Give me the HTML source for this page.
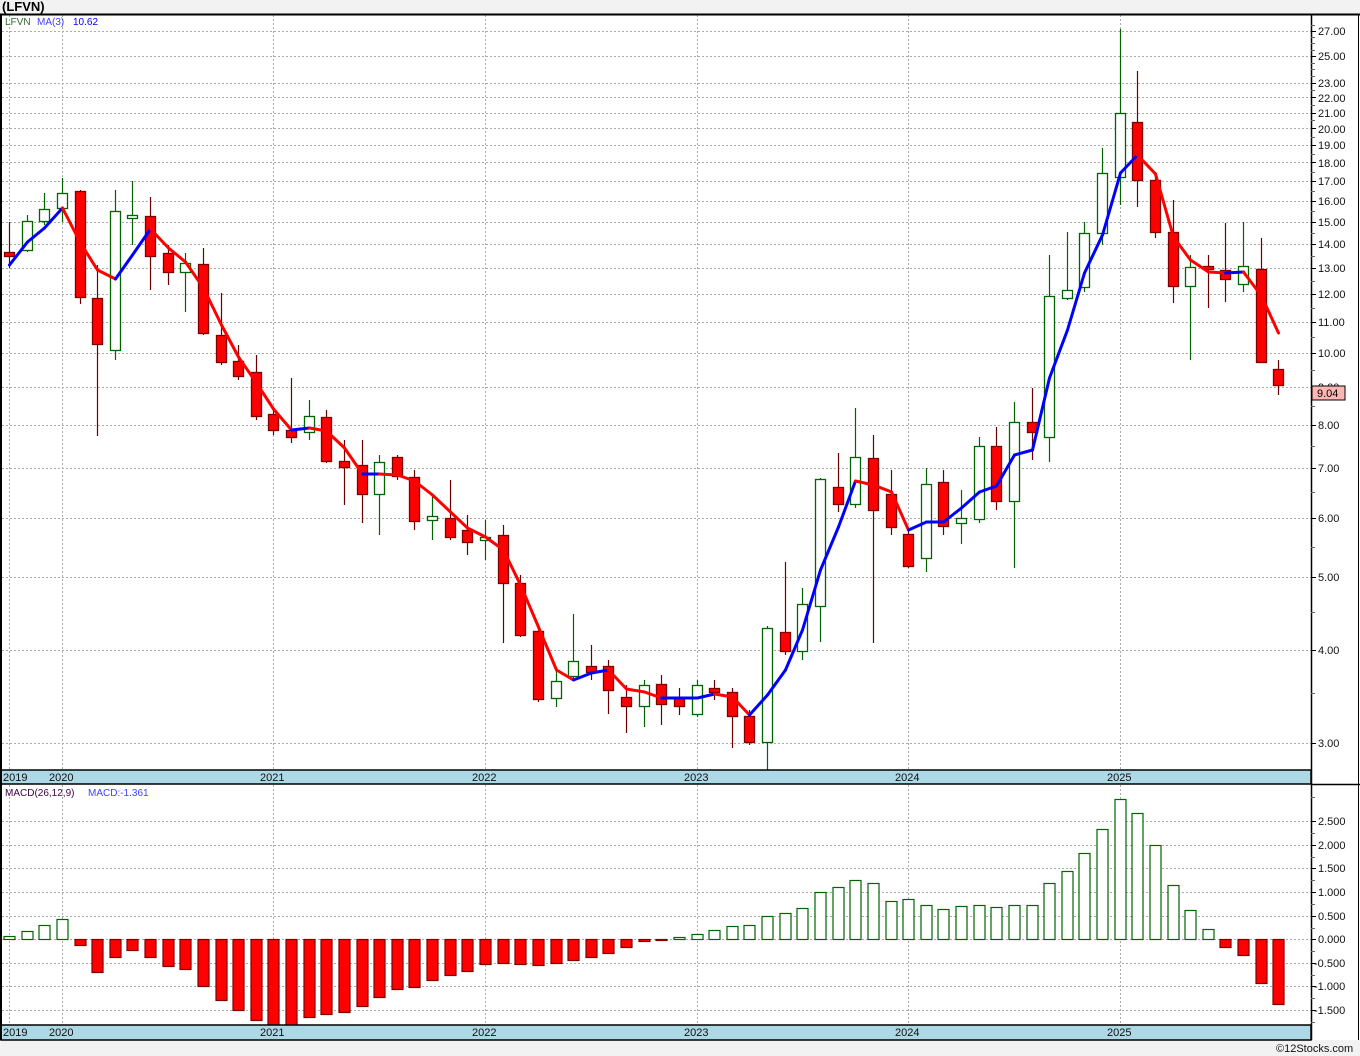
<!DOCTYPE html>
<html><head><meta charset="utf-8"><style>
html,body{margin:0;padding:0;background:#f2f2f2;width:1360px;height:1056px;overflow:hidden}
svg{display:block;font-family:"Liberation Sans",sans-serif}
</style></head><body>
<svg id="s" width="1360" height="1056" xmlns="http://www.w3.org/2000/svg">
<rect x="0" y="0" width="1360" height="1056" fill="#f2f2f2"/>
<rect x="0" y="14" width="1360" height="1026" fill="#fff"/>
<g id="grid"></g>
<g id="shapes"></g>
<rect x="1" y="770" width="1310" height="14" fill="#add8e6" stroke="#000" stroke-width="1.5"/>
<rect x="1" y="1025" width="1310" height="15" fill="#add8e6" stroke="#000" stroke-width="1.5"/>
<line x1="0" y1="14.5" x2="1360" y2="14.5" stroke="#000" stroke-width="2"/>
<line x1="1" y1="14" x2="1" y2="1040" stroke="#000" stroke-width="2"/>
<line x1="1311.5" y1="14" x2="1311.5" y2="1040" stroke="#000" stroke-width="1.5"/>
<line x1="1311" y1="784.5" x2="1360" y2="784.5" stroke="#000" stroke-width="1.5"/>
<line x1="1358.5" y1="14" x2="1358.5" y2="1040" stroke="#000" stroke-width="1"/>
<g id="ticks"></g>
<text x="2" y="11" font-size="13" font-weight="bold" fill="#000">(LFVN)</text>
<text x="5" y="25" font-size="10" fill="#2e6b2e">LFVN</text>
<text x="37" y="25" font-size="10" fill="#4040ff">MA(3)</text>
<text x="73" y="25" font-size="10" fill="#0000ff">10.62</text>
<text x="5" y="796" font-size="10" fill="#400040">MACD(26,12,9)</text>
<text x="88" y="796" font-size="10" fill="#4040ff">MACD:-1.361</text>
<g font-size="11" fill="#111">
<text x="3" y="781">2019</text><text x="49" y="781">2020</text><text x="260" y="781">2021</text><text x="472" y="781">2022</text><text x="684" y="781">2023</text><text x="895" y="781">2024</text><text x="1107" y="781">2025</text>
<text x="3" y="1036">2019</text><text x="49" y="1036">2020</text><text x="260" y="1036">2021</text><text x="472" y="1036">2022</text><text x="684" y="1036">2023</text><text x="895" y="1036">2024</text><text x="1107" y="1036">2025</text>
</g>
<g font-size="11" fill="#111">
<text x="1318" y="35">27.00</text><text x="1318" y="60">25.00</text><text x="1318" y="87">23.00</text><text x="1318" y="102">22.00</text><text x="1318" y="117">21.00</text><text x="1318" y="133">20.00</text><text x="1318" y="149">19.00</text><text x="1318" y="167">18.00</text><text x="1318" y="185">17.00</text><text x="1318" y="205">16.00</text><text x="1318" y="226">15.00</text><text x="1318" y="248">14.00</text><text x="1318" y="272">13.00</text><text x="1318" y="298">12.00</text><text x="1318" y="326">11.00</text><text x="1318" y="357">10.00</text><text x="1318" y="391">9.00</text><text x="1318" y="429">8.00</text><text x="1318" y="472">7.00</text><text x="1318" y="522">6.00</text><text x="1318" y="581">5.00</text><text x="1318" y="654">4.00</text><text x="1318" y="747">3.00</text>
<text x="1318" y="825">2.500</text><text x="1318" y="849">2.000</text><text x="1318" y="872">1.500</text><text x="1318" y="896">1.000</text><text x="1318" y="920">0.500</text><text x="1318" y="943">0.000</text><text x="1314" y="967">-0.500</text><text x="1314" y="990">-1.000</text><text x="1314" y="1014">-1.500</text>
</g>
<rect x="1312" y="386" width="33" height="14" fill="#ffb6b0" stroke="#000" stroke-width="1"/>
<text x="1317" y="397" font-size="11" fill="#000">9.04</text>
<text x="1276" y="1052" font-size="11" fill="#111">©12Stocks.com</text>
</svg>
<script>
var NS="http://www.w3.org/2000/svg";
function el(p,t,a){var e=document.createElementNS(NS,t);for(var k in a)e.setAttribute(k,a[k]);p.appendChild(e);return e;}
var G=document.getElementById('grid'),S=document.getElementById('shapes'),T=document.getElementById('ticks');
function py(p){return 743-324*Math.log(p/3);}
var prices=[27,25,23,22,21,20,19,18,17,16,15,14,13,12,11,10,9,8,7,6,5,4,3];
prices.forEach(function(p){var y=Math.round(py(p))+0.5;el(G,'line',{x1:2,y1:y,x2:1311,y2:y,stroke:'#aaa','stroke-dasharray':'2,2'});el(T,'line',{x1:1311,y1:y,x2:1316,y2:y,stroke:'#000'});});
for(var p=2.5;p<30;p+=0.5){if(prices.indexOf(p)>=0)continue;var y=Math.round(py(p))+0.5;if(y>20&&y<770)el(T,'line',{x1:1311,y1:y,x2:1315,y2:y,stroke:'#666'});}
[821,845,868,892,916,939,963,986,1010].forEach(function(y){el(G,'line',{x1:2,y1:y+.5,x2:1311,y2:y+.5,stroke:'#aaa','stroke-dasharray':'2,2'});el(T,'line',{x1:1311,y1:y+.5,x2:1316,y2:y+.5,stroke:'#000'});});
[797,833,857,880,904,928,951,975,998,1022].forEach(function(y){el(T,'line',{x1:1311,y1:y+.5,x2:1315,y2:y+.5,stroke:'#666'});});
[9,62,273,485,697,908,1120].forEach(function(x){el(G,'line',{x1:x+.5,y1:15,x2:x+.5,y2:770,stroke:'#aaa','stroke-dasharray':'2,2'});el(G,'line',{x1:x+.5,y1:785,x2:x+.5,y2:1025,stroke:'#aaa','stroke-dasharray':'2,2'});});
// [bodyTop, bodyBot, wickTop, wickBot, up?]
var C=[[252,256,222,268,0],[221,250,215,252,1],[209,221,193,225,1],[193,208,178,222,1],[191,297,190,304,0],[298,344,265,436,0],[211,350,190,360,1],[215,218,181,245,1],[216,256,197,290,0],[253,272,245,285,0],[263,272,253,312,1],[264,333,248,335,0],[335,362,293,365,0],[361,376,345,380,0],[372,416,355,420,0],[414,430,410,435,0],[430,437,378,443,0],[416,432,400,440,1],[417,461,410,463,0],[461,467,440,505,0],[465,494,440,523,0],[462,494,455,535,1],[457,476,455,480,0],[477,521,470,530,0],[516,520,495,540,1],[518,537,480,540,0],[530,542,515,555,0],[537,540,520,560,1],[535,583,525,643,0],[583,635,575,637,0],[631,699,628,702,0],[681,698,670,707,1],[661,676,614,680,1],[666,672,645,680,0],[666,690,660,714,0],[697,706,685,733,0],[685,706,680,727,1],[684,704,675,725,0],[698,706,688,715,0],[685,714,680,717,1],[688,692,680,700,0],[692,716,688,748,0],[716,742,710,745,0],[628,742,626,770,1],[632,651,562,655,0],[604,651,588,660,1],[479,606,478,642,1],[487,504,453,512,0],[457,504,408,508,1],[458,510,435,643,0],[494,527,470,535,0],[534,566,530,568,0],[484,558,468,572,1],[482,526,470,535,0],[518,523,490,544,1],[446,519,437,523,1],[446,501,427,510,0],[422,501,402,568,1],[422,432,388,460,0],[296,437,255,462,1],[290,298,232,300,1],[233,287,222,292,1],[173,233,148,245,1],[113,177,29,205,1],[122,180,71,207,0],[180,232,172,238,0],[232,286,200,303,0],[267,286,255,360,1],[266,269,255,308,0],[270,279,223,302,0],[266,284,222,292,1],[269,362,238,363,0],[369,385,360,395,0]];
var MA=[265,242,228,208,243,270,279,255,229,248,262,288,325,357,383,409,430,428,431,448,474,474,475,481,495,512,528,537,550,585,627,670,680,673,670,689,692,698,698,698,694,697,715,695,670,630,570,527,481,485,492,530,522,522,508,492,486,455,450,378,330,273,235,173,155,174,237,260,272,273,272,296,333];
var M=[936,931,925,919,945,972,957,950,957,966,969,986,1000,1010,1020,1025,1025,1017,1014,1012,1006,997,989,987,980,975,971,964,963,964,965,963,960,957,953,947,941,940,937,934,930,926,925,916,913,908,892,887,880,883,901,899,905,909,906,905,907,905,905,883,871,853,829,799,813,845,885,910,929,947,955,983,1004];
function X(i){return Math.round(9+17.63*i);}
C.forEach(function(c,i){var x=X(i),up=c[4];var col=up?'#006400':'#6b0000';
el(S,'line',{x1:x+.5,y1:c[2],x2:x+.5,y2:c[3],stroke:col,'stroke-width':1.2});
var h=Math.max(c[1]-c[0],2);
el(S,'rect',{x:x-4.5,y:c[0]+.5,width:10,height:h,fill:up?'#fff':'#ff0000',stroke:up?'#006400':'#800000','stroke-width':1.3});});
for(var i=1;i<MA.length;i++){el(S,'line',{x1:X(i-1)+.5,y1:MA[i-1],x2:X(i)+.5,y2:MA[i],stroke:MA[i]>MA[i-1]?'#ff0000':'#0000ff','stroke-width':3,'stroke-linecap':'round'});}
M.forEach(function(v,i){var x=X(i),up=v<939;var t=Math.min(v,939),h=Math.max(Math.abs(v-939),1);
el(S,'rect',{x:x-5,y:t+.5,width:11,height:h,fill:up?'#fff':'#ff0000',stroke:up?'#006400':'#800000','stroke-width':1.2});});
</script>
</body></html>
